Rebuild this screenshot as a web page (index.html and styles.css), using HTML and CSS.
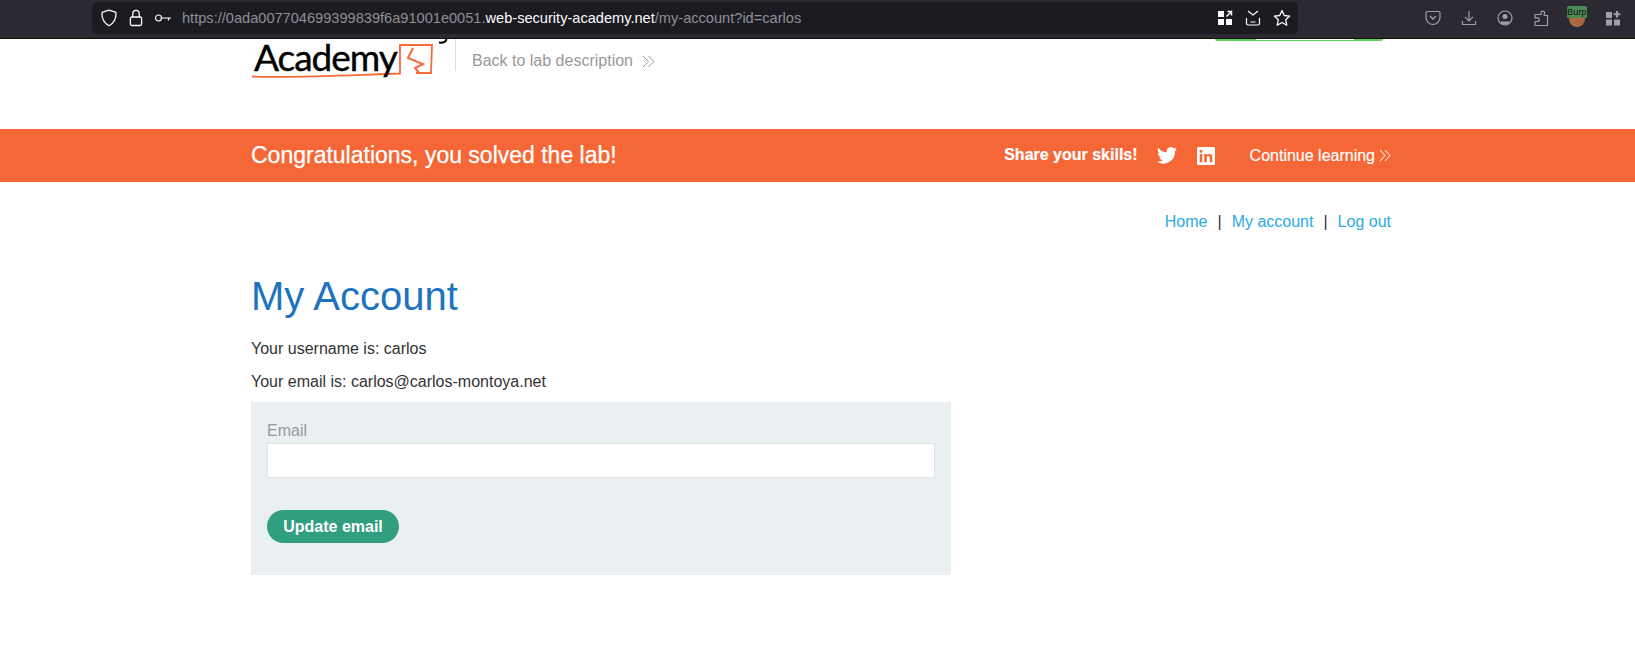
FILE: index.html
```html
<!DOCTYPE html>
<html lang="en">
<head>
<meta charset="utf-8">
<title>My Account</title>
<link rel="stylesheet" href="styles.css">
</head>
<body>
<div class="toolbar">
  <div class="urlbar">
    <div class="url-left">
      <svg class="tb-icon" width="18" height="18" viewBox="0 0 18 18"><path d="M9 1.200 L16 3.400 C16.300 9.500 14.300 14 9 16.800 C3.700 14 1.700 9.500 2 3.400 Z" fill="none" stroke="#fbfbfe" stroke-width="1.300" stroke-linejoin="round"/></svg>
      <svg class="tb-icon" width="18" height="18" viewBox="0 0 18 18"><rect x="3.400" y="8" width="11.200" height="8.500" rx="1.500" fill="none" stroke="#fbfbfe" stroke-width="1.300"/><path d="M5.800 8V4.500a3.200 3.200 0 0 1 6.400 0V8" fill="none" stroke="#fbfbfe" stroke-width="1.300"/></svg>
      <svg class="tb-icon" width="18" height="18" viewBox="0 0 18 18"><circle cx="4.500" cy="9" r="3" fill="none" stroke="#fbfbfe" stroke-width="1.200"/><path d="M7.500 9H17M14.500 9v2.500" fill="none" stroke="#fbfbfe" stroke-width="1.200"/></svg>
      <span class="url"><span class="url-dim">https://0ada007704699399839f6a91001e0051.</span><span class="url-host">web-security-academy.net</span><span class="url-dim">/my-account?id=carlos</span></span>
    </div>
    <div class="url-right">
      <svg width="16" height="16" viewBox="0 0 16 16"><path fill="#fbfbfe" d="M1 1h6v6H1zM1 9h6v6H1zM9 9h6v6H9z"/><path d="M9.500 6.500L14.500 1.500M10.500 1.500h4v4" fill="none" stroke="#fbfbfe" stroke-width="1.500"/></svg>
      <svg width="16" height="16" viewBox="0 0 16 16"><path d="M3 1l5 4 5-4" fill="none" stroke="#fbfbfe" stroke-width="1.200"/><path d="M1.500 8v5.500a1.500 1.500 0 0 0 1.500 1.500h10a1.500 1.500 0 0 0 1.500-1.500V8M5.500 12h5" fill="none" stroke="#fbfbfe" stroke-width="1.200"/></svg>
      <svg width="18" height="18" viewBox="0 0 18 18"><path d="M9 1.500l2.300 5 5.400.6-4 3.700 1.100 5.400L9 13.500l-4.800 2.700 1.100-5.400-4-3.700 5.400-.6z" fill="none" stroke="#fbfbfe" stroke-width="1.300" stroke-linejoin="round"/></svg>
    </div>
  </div>
  <div class="tools">
    <svg width="16" height="16" viewBox="0 0 16 16"><path d="M2.500 1.500h11A1.500 1.500 0 0 1 15 3v4.500a7 7 0 0 1-14 0V3a1.500 1.500 0 0 1 1.500-1.500z" fill="none" stroke="#a0a0a6" stroke-width="1.200"/><path d="M5 6l3 3 3-3" fill="none" stroke="#a0a0a6" stroke-width="1.300"/></svg>
    <svg width="16" height="16" viewBox="0 0 16 16"><path d="M8 1v9.500M4 6.800l4 4 4-4M1.500 11v3.500h13V11" fill="none" stroke="#a0a0a6" stroke-width="1.200"/></svg>
    <svg width="16" height="16" viewBox="0 0 16 16"><circle cx="8" cy="8" r="7" fill="none" stroke="#a0a0a6" stroke-width="1.200"/><circle cx="8" cy="6.500" r="2.500" fill="#a0a0a6"/><path d="M3.500 11.500h9v1.300a7 7 0 0 1-9 0z" fill="#a0a0a6"/></svg>
    <svg width="16" height="16" viewBox="0 0 16 16"><path d="M6 4h2V2.500a1.800 1.800 0 0 1 3.600 0L11 5h3.500v10H2v-4h2.500a1.800 1.800 0 0 0 0-3.600H2V4z" transform="translate(0 .5)" fill="none" stroke="#a0a0a6" stroke-width="1.200" stroke-linejoin="round"/></svg>
    <div class="burp"><span class="burp-label">Burp</span></div>
    <svg width="16" height="16" viewBox="0 0 16 16"><path fill="#a0a0a6" d="M1 2h6v6H1zM1 9.500h6v6H1zM9 9.500h6v6H9zM11 1h2v2.300h2.300v2H13v2.300h-2V5.300H8.700v-2H11z"/></svg>
  </div>
</div>

<header class="lab-header">
  <div class="wrap lab-header-inner">
    <div class="logo">
      <svg class="logo-mark" width="184" height="38" viewBox="0 0 184 38"><path d="M2 34.500C50 36 100 33 150 31.500V3H182L181 31H166" fill="none" stroke="#f76a39" stroke-width="1.800"/><path d="M163 6L158 16L173 22L165 26L170 32" fill="none" stroke="#f76a39" stroke-width="2"/></svg>
      <span class="logo-word">Academy</span>
      <svg class="logo-tail" width="12" height="5" viewBox="0 0 12 5"><path d="M9.500 0C9 2.500 6 4 2 3.500" fill="none" stroke="#000" stroke-width="2"/></svg>
    </div>
    <a class="back-link" href="#">Back to lab description
      <svg class="chev" width="13" height="13" viewBox="0 0 13 13"><path d="M1 1l5.500 5.500L1 12M6.500 1L12 6.500 6.500 12" fill="none" stroke="#999" stroke-width="1"/></svg>
    </a>
    <div class="status-strip"></div>
  </div>
</header>

<section class="banner">
  <div class="wrap banner-inner">
    <h4 class="banner-title">Congratulations, you solved the lab!</h4>
    <div class="banner-actions">
      <span class="share">Share your skills!</span>
      <svg class="twitter" width="20" height="17" viewBox="0 0 24 20"><path fill="#fff" d="M24 2.400a9.800 9.800 0 0 1-2.800.8A4.900 4.900 0 0 0 23.300.5a9.800 9.800 0 0 1-3.100 1.200 4.900 4.900 0 0 0-8.400 4.500A13.900 13.900 0 0 1 1.700.9a4.900 4.900 0 0 0 1.500 6.600 4.900 4.900 0 0 1-2.200-.6c0 2.400 1.700 4.500 3.900 5a4.900 4.900 0 0 1-2.200.1 4.900 4.900 0 0 0 4.600 3.400A9.900 9.900 0 0 1 0 17.400 13.900 13.900 0 0 0 21.500 5c1-.7 1.800-1.600 2.500-2.600z"/></svg>
      <svg class="linkedin" width="18" height="18" viewBox="0 0 18 18"><path fill="#fff" fill-rule="evenodd" d="M1.500 0h15A1.500 1.500 0 0 1 18 1.500v15a1.500 1.500 0 0 1-1.500 1.500h-15A1.500 1.500 0 0 1 0 16.500v-15A1.500 1.500 0 0 1 1.500 0zM2.700 7v8.300h2.600V7zM4 2.800a1.500 1.500 0 1 0 0 3 1.500 1.500 0 0 0 0-3zM7.200 7v8.300h2.600v-4.400c0-2.400 3-2.500 3-.1v4.500h2.600v-5c0-4-4.200-3.900-5.600-1.900V7z"/></svg>
      <a class="continue" href="#">Continue learning
        <svg class="chev-small" width="12" height="13" viewBox="0 0 12 13"><path d="M1 1l5 5.500L1 12M6 1l5 5.500L6 12" fill="none" stroke="#fff" stroke-width="1"/></svg>
      </a>
    </div>
  </div>
</section>

<main class="wrap content">
  <nav class="top-links">
    <a href="#">Home</a><span class="sep">|</span><a href="#">My account</a><span class="sep">|</span><a href="#">Log out</a>
  </nav>
  <h1 class="title">My Account</h1>
  <p class="line">Your username is: carlos</p>
  <p class="line">Your email is: carlos@carlos-montoya.net</p>
  <form class="email-form">
    <label class="field-label" for="email">Email</label>
    <input class="field" id="email" type="email">
    <button class="btn" type="button">Update email</button>
  </form>
</main>
</body>
</html>
```
FILE: styles.css
```css
* { box-sizing: border-box; }
html, body { margin: 0; padding: 0; }
body {
  background: #fff;
  font-family: "Liberation Sans", Arial, sans-serif;
  color: #333;
  font-size: 16px;
  height: 658px;
  overflow: hidden;
}
a { text-decoration: none; }

.toolbar {
  height: 39px;
  background: #2b2a33;
  border-bottom: 1px solid #0c0c0d;
  display: flex;
  align-items: flex-start;
  padding: 2px 0 0 92px;
}
.urlbar {
  width: 1206px;
  height: 32px;
  background: #1c1b22;
  border-radius: 5px;
  display: flex;
  align-items: center;
  justify-content: space-between;
  padding: 0 7px 0 8px;
}
.url-left { display: flex; align-items: center; gap: 9px; }
.url { font-size: 14.600px; white-space: nowrap; margin-left: 1px; }
.url-dim { color: #8f8f94; }
.url-host { color: #fbfbfe; }
.url-right { display: flex; align-items: center; gap: 12px; }
.tools {
  display: flex;
  align-items: center;
  gap: 20px;
  height: 32px;
  margin-left: 127px;
}
.burp {
  width: 16px;
  height: 16px;
  margin-top: 2px;
  border-radius: 50%;
  background: #a9683e;
  position: relative;
}
.burp-label {
  position: absolute;
  left: -2px;
  top: -5px;
  width: 20px;
  height: 12px;
  background: #4d8a55;
  color: #111;
  font-size: 9.200px;
  line-height: 12px;
  white-space: nowrap;
  border-radius: 2px 2px 0 0;
}

.wrap { width: 1140px; margin-left: 251px; }
.lab-header { height: 90px; }
.lab-header-inner { position: relative; display: flex; height: 100%; }
.logo { position: relative; width: 205px; height: 32px; border-right: 1px solid #ddd; flex: none; }
.logo-word {
  position: absolute;
  left: 3px;
  top: 0;
  color: #000;
  font-family: Lato, sans-serif;
  font-size: 37px;
  line-height: 36px;
  letter-spacing: -1px;
  -webkit-text-stroke: .4px #000;
}
.logo-tail { position: absolute; left: 186px; top: 0; }
.logo-mark { position: absolute; left: -1px; top: 3px; }
.back-link { color: #999; align-self: flex-start; margin: 13px 0 0 16px; line-height: 18px; display: flex; align-items: center; gap: 9px; }
.status-strip {
  position: absolute;
  left: 964px;
  top: 0;
  width: 168px;
  height: 2px;
  background: #5fd35a;
  border-radius: 0 0 6px 6px;
}
.status-strip::after {
  content: "";
  position: absolute;
  left: 41px;
  width: 98px;
  top: 0;
  height: 1px;
  background: #fff;
}

.banner { height: 53px; background: #f66738; color: #fff; }
.banner-inner { height: 100%; display: flex; align-items: center; justify-content: space-between; }
.banner-title { margin: 0; font-size: 23px; font-weight: 400; -webkit-text-stroke: .25px #fff; }
.banner-actions { display: flex; align-items: center; }
.share { font-weight: 700; font-size: 16px; margin: 0 19px 2px 0; -webkit-text-stroke: .2px #fff; }
.twitter { margin-right: 20px; }
.linkedin { margin-right: 35px; }
.continue { color: #fff; display: flex; align-items: center; gap: 4px; -webkit-text-stroke: .15px #fff; }

.top-links { display: flex; justify-content: flex-end; margin-top: 31px; line-height: 18px; }
.top-links a { color: #29abe2; }
.sep { color: #333; margin: 0 10px; }
.title { margin: 42px 0 0; color: #1e73be; font-size: 40px; font-weight: 400; line-height: 46px; }
.line { margin: 21px 0 0; line-height: 18px; }
.line + .line { margin-top: 15px; }
.email-form {
  width: 700px;
  height: 173px;
  margin-top: 11px;
  background: #eaeff2;
  padding: 20px 16px 0;
  display: flex;
  flex-direction: column;
  align-items: flex-start;
}
.field-label { color: #999; line-height: 18px; }
.field {
  width: 100%;
  height: 35px;
  margin-top: 3px;
  border: 1px solid #e0e4e7;
  background: #fff;
}
.btn {
  margin-top: 32px;
  width: 132px;
  height: 33px;
  border: 0;
  border-radius: 17px;
  background: #319e7f;
  color: #fff;
  font-family: inherit;
  font-weight: 700;
  font-size: 16px;
  padding: 0;
}
```
